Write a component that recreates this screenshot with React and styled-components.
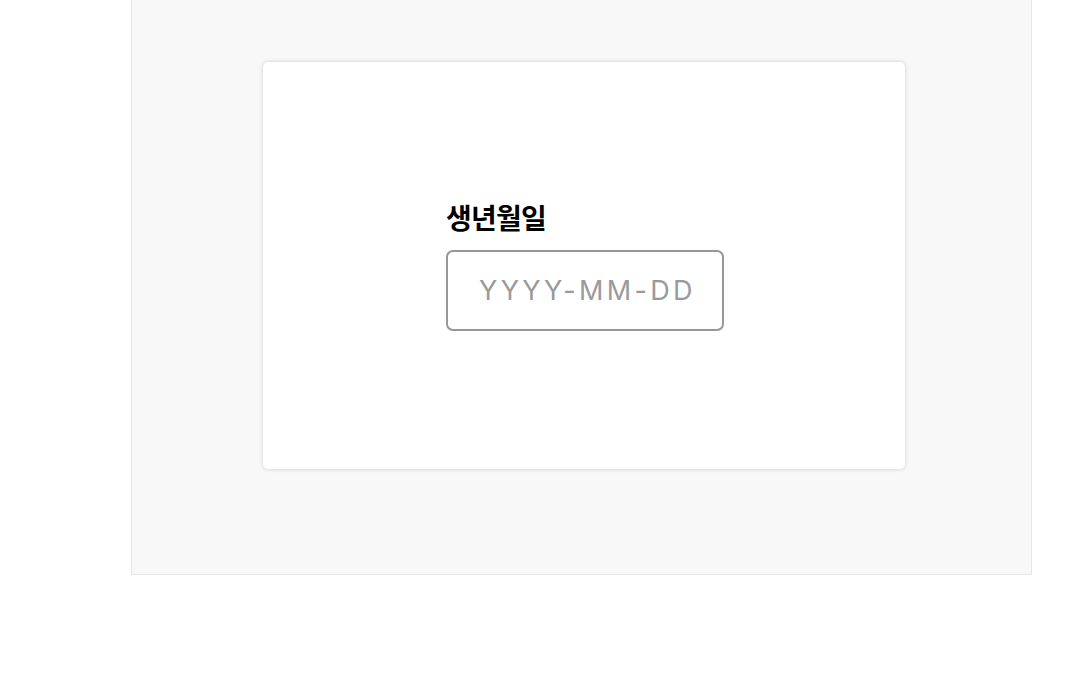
import React, { useState } from "react";
import styled, { createGlobalStyle } from "styled-components";

const GlobalStyle = createGlobalStyle`
  html, body {
    margin: 0;
    padding: 0;
    background: #ffffff;
    font-family: Inter, "Noto Sans CJK KR", sans-serif;
  }
`;

const Page = styled.div`
  width: 1085px;
  height: 677px;
  padding-left: 131px;
  box-sizing: border-box;
`;

const Panel = styled.div`
  width: 901px;
  height: 575px;
  box-sizing: border-box;
  background: #f8f8f8;
  border: 1px solid #e6e6e6;
  border-top: none;
  padding: 62px 0 0 131px;
`;

const Card = styled.div`
  width: 642px;
  height: 407px;
  box-sizing: border-box;
  background: #ffffff;
  border-radius: 5px;
  box-shadow: 0 0 4px rgba(0, 0, 0, 0.18);
  display: flex;
  align-items: center;
  justify-content: center;
`;

const Field = styled.div`
  display: flex;
  flex-direction: column;
  gap: 22px;
  margin-top: 6px;
  margin-left: 2px;
`;

const Label = styled.label`
  font-family: "Noto Sans CJK KR", sans-serif;
  font-weight: 700;
  font-size: 28px;
  line-height: 22px;
  color: #000;
  letter-spacing: -0.8px;
`;

const Input = styled.input`
  width: 278px;
  height: 81px;
  box-sizing: border-box;
  border: 2px solid #979797;
  border-radius: 7px;
  padding: 0 0 0 31px;
  font-family: Inter, sans-serif;
  font-size: 27px;
  letter-spacing: 3.3px;
  color: #333;
  outline: none;
  background: #fff;

  &::placeholder {
    color: #9a9a9a;
  }
`;

const App = () => {
  const [birth, setBirth] = useState("");

  return (
    <>
      <GlobalStyle />
      <Page>
        <Panel>
          <Card>
            <Field>
              <Label htmlFor="birth">생년월일</Label>
              <Input
                id="birth"
                type="text"
                value={birth}
                onChange={(e) => setBirth(e.target.value)}
                placeholder="YYYY-MM-DD"
              />
            </Field>
          </Card>
        </Panel>
      </Page>
    </>
  );
};

export default App;
